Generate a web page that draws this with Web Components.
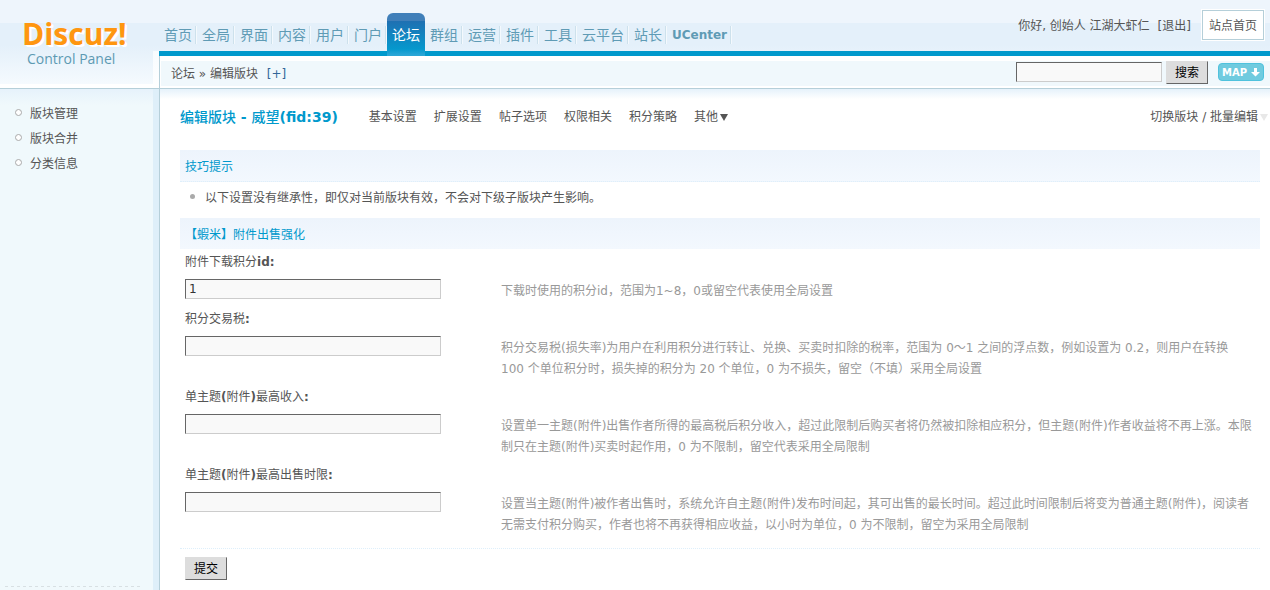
<!DOCTYPE html>
<html lang="zh-CN">
<head>
<meta charset="utf-8">
<title>Discuz! Control Panel</title>
<style>
html,body{margin:0;height:100%}
body{font:12px/21px "DejaVu Sans","Noto Sans CJK SC",sans-serif;color:#555;background:#fff;
--blue:#09c;--line:#b5cfd9}
</style>
</head>
<body>
<dz-shell>
  <dz-logo slot="logo"></dz-logo>
  <dz-nav slot="nav" items="首页,全局,界面,内容,用户,门户,论坛,群组,运营,插件,工具,云平台,站长,UCenter" current="论坛"></dz-nav>
  <dz-user slot="user"></dz-user>
  <dz-crumbs slot="crumbs"></dz-crumbs>
  <dz-side slot="side" items="版块管理,版块合并,分类信息"></dz-side>
  <dz-titlebar items="基本设置,扩展设置,帖子选项,权限相关,积分策略"></dz-titlebar>
  <dz-section dotted><span slot="title">技巧提示</span><dz-tip>以下设置没有继承性，即仅对当前版块有效，不会对下级子版块产生影响。</dz-tip></dz-section>
  <dz-section><span slot="title">【蝦米】附件出售强化</span>
    <dz-field label="附件下载积分" tail="id:" value="1">下载时使用的积分id，范围为1~8，0或留空代表使用全局设置</dz-field>
    <dz-field label="积分交易税" tail=":">积分交易税(损失率)为用户在利用积分进行转让、兑换、买卖时扣除的税率，范围为 0～1 之间的浮点数，例如设置为 0.2，则用户在转换 100 个单位积分时，损失掉的积分为 20 个单位，0 为不损失，留空（不填）采用全局设置</dz-field>
    <dz-field label="单主题(附件)最高收入" tail=":">设置单一主题(附件)出售作者所得的最高税后积分收入，超过此限制后购买者将仍然被扣除相应积分，但主题(附件)作者收益将不再上涨。本限制只在主题(附件)买卖时起作用，0 为不限制，留空代表采用全局限制</dz-field>
    <dz-field label="单主题(附件)最高出售时限" tail=":">设置当主题(附件)被作者出售时，系统允许自主题(附件)发布时间起，其可出售的最长时间。超过此时间限制后将变为普通主题(附件)，阅读者无需支付积分购买，作者也将不再获得相应收益，以小时为单位，0 为不限制，留空为采用全局限制</dz-field>
  </dz-section>
  <dz-submit>提交</dz-submit>
</dz-shell>
<script>
const LINK = 'a{color:inherit;text-decoration:none}';
const INPUT = 'input{box-sizing:border-box;height:20px;margin:0;padding:0 3px;border:1px solid;border-color:#666 #ccc #ccc #666;background:#f9f9f9;font:inherit;color:#333;border-radius:0}';
const BUTTON = 'button{box-sizing:border-box;width:42px;height:23px;margin:0;padding:0;border:1px solid;border-color:#ddd #666 #666 #ddd;background:#ddd;font:inherit;line-height:20px;color:#000;border-radius:0}';
const define = (name, render) => customElements.define(name, class extends HTMLElement {
  connectedCallback() {
    if (!this.shadowRoot) this.attachShadow({mode: 'open'}).innerHTML = render(this);
  }
});
const list = el => el.getAttribute('items').split(',');

define('dz-shell', () => `<style>
:host{display:flex;flex-direction:column;min-height:100%}
header{display:flex;background:linear-gradient(#eef5fc 23px,#e4f0fa 23px,#e4f0fa 45px,#f5fafe 84px,#fff 84px);border-bottom:1px solid var(--line)}
.brand{flex:none;width:159px;background:linear-gradient(#f7fbfe,#fff) right bottom/6px 37px no-repeat}
.top{flex:1;min-width:0}
.row{display:flex;justify-content:space-between;height:51px;border-bottom:5px solid var(--blue)}
.low{background:#fff;border-left:1px solid var(--line);padding:5px 0 2px 1px}
.body{flex:1;display:flex}
aside{flex:none;box-sizing:border-box;width:160px;border-right:1px solid var(--line);background:linear-gradient(#deeff9,#deeff9) right/6px 100% no-repeat,linear-gradient(#e6f2fb,#f0f9fc 16px);display:flex}
main{flex:1;min-width:0;padding:0 10px 8px 20px;background:linear-gradient(#e6f2fb,#fff 10px)}
</style>
<header><div class="brand"><slot name="logo"></slot></div>
<div class="top"><div class="row"><slot name="nav"></slot><slot name="user"></slot></div><div class="low"><slot name="crumbs"></slot></div></div></header>
<div class="body"><aside><slot name="side"></slot></aside><main><slot></slot></main></div>`);

define('dz-logo', () => `<style>
:host{display:block;padding:16px 0 0 22px;font-family:"Open Sans",sans-serif;white-space:nowrap}
b,span{display:block}
b{font-size:30px;line-height:36px;color:#ff9610;text-shadow:1px 1px #fff,2px 2px #fff}
span{padding-left:5px;font-size:14px;line-height:14px;color:#5d9ab3}
</style><b>Discuz!</b><span>Control Panel</span>`);

define('dz-nav', el => `<style>${LINK}
:host{display:block;padding-top:13px}
nav{display:flex}
a{padding:0 5px;height:38px;font-size:14px;line-height:44px;color:#5f9bb5;white-space:nowrap;background:linear-gradient(90deg,#cde1ec 50%,#f4f9fd 50%) right 13px/2px 18px no-repeat}
a.latin{font-size:12px;font-weight:bold}
a.on{height:43px;color:#fff;border-radius:6px 6px 0 0;background:linear-gradient(#407fb9 8px,#1f70b2 8px,#0598cd 36px,#2ba6d6 42px)}
</style><nav>${list(el).map(t => `<a href="#" class="${t === el.getAttribute('current') ? 'on' : /^\w+$/.test(t) ? 'latin' : ''}">${t}</a>`).join('')}</nav>`);

define('dz-user', () => `<style>${LINK}
:host{display:flex;align-items:flex-start;padding:10px 6px 0 0;white-space:nowrap;line-height:32px}
.logout{margin:0 11px 0 8px}
.home{padding:0 6px;height:28px;border:1px solid var(--line);background:#fff;outline:1px solid #fff;line-height:30px}
</style><span>你好, 创始人 江湖大虾仁</span><a class="logout" href="#">[退出]</a><a class="home" href="#">站点首页</a>`);

define('dz-crumbs', () => `<style>${LINK}${INPUT}${BUTTON}
:host{display:flex;justify-content:space-between;height:25px;background:#f0f8fc;padding:0 6px 0 10px}
.path{line-height:27px}
.add{margin-left:5px;color:#369}
form{display:flex;align-items:flex-start}
input{width:146px;margin:1px 4px 0 0}
.map{box-sizing:border-box;display:flex;align-items:center;justify-content:space-between;width:46px;height:18px;margin:2px 0 0 10px;padding:0 3px;border:1px solid #4fc2dd;border-radius:4px;background:#70cbdf;color:#fff;font-size:10px;font-weight:bold}
</style><div class="path">论坛 » 编辑版块 <a class="add" href="#">[+]</a></div>
<form onsubmit="return false"><input type="text" aria-label="搜索"><button>搜索</button><a class="map" href="#">MAP<svg width="9" height="9" viewBox="0 0 9 9"><path d="M3 0h3v4h3L4.500 8.500 0 4h3z" fill="#fff"/></svg></a></form>`);

define('dz-side', el => `<style>${LINK}
:host{flex:1;display:flex;flex-direction:column;justify-content:space-between;padding:13px 12px 3px 5px}
ul{margin:0;padding:0;list-style:none}
li{display:flex;line-height:25px}
li::before{content:"";box-sizing:border-box;width:7px;height:7px;margin:7px 8px 0 10px;border:1px solid #aaa;border-radius:50%;background:#fff}
.rule{height:1px;margin-right:6px;background:repeating-linear-gradient(90deg,#d8e0e3 0 3px,transparent 3px 6px)}
</style><ul>${list(el).map(t => `<li><a href="#">${t}</a></li>`).join('')}</ul><div class="rule"></div>`);

define('dz-titlebar', el => `<style>${LINK}
:host{display:flex;align-items:center;height:57px;margin:0 -8px 4px 0;white-space:nowrap}
h1{margin:0 31px 0 0;font-size:14px;color:var(--blue)}
h1 span{font-weight:500}
nav{flex:1;display:flex;gap:17px}
.more,.switch{display:flex;align-items:center;gap:2px}
</style><h1><span>编辑版块</span> - <span>威望</span>(fid:39)</h1>
<nav>${list(el).map(t => `<a href="#">${t}</a>`).join('')}<a class="more" href="#">其他<svg width="8" height="7" viewBox="0 0 8 7"><path d="M0 0h8L4 7z" fill="#555"/></svg></a></nav>
<a class="switch" href="#">切换版块 / 批量编辑<svg width="8" height="7" viewBox="0 0 8 7"><path d="M0 0h8L4 7z" fill="#e8e8e8"/></svg></a>`);

define('dz-section', () => `<style>
:host{display:block}
h2{box-sizing:border-box;height:31px;margin:0;padding:0 5px;font-size:12px;font-weight:normal;line-height:34px;color:var(--blue);background:linear-gradient(#edf4fc,#f3f8fe)}
:host([dotted]) h2{height:32px;border-bottom:1px dotted #deeffb}
</style><h2><slot name="title"></slot></h2><slot></slot>`);

define('dz-tip', () => `<style>
:host{display:flex;padding:6px 5px 9px 10px}
:host::before{content:"";flex:none;width:5px;height:5px;margin:6px 10px 0 0;border-radius:50%;background:#aaa}
</style><div><slot></slot></div>`);

define('dz-field', el => `<style>${INPUT}
:host{display:block;padding:0 5px}
label{display:block;padding-top:1px;line-height:24px}
.row{display:flex;padding:5px 0 4px}
input{flex:none;width:256px;margin-right:60px}
p{flex:1;margin:0;padding:2px 2px 0 0;color:#999}
</style><label for="f">${el.getAttribute('label').replace(/[()]/g, '<b>$&</b>')}<b>${el.getAttribute('tail')}</b></label>
<div class="row"><input id="f" type="text" value="${el.getAttribute('value') || ''}"><p><slot></slot></p></div>`);

define('dz-submit', () => `<style>${BUTTON}
:host{display:block;margin-top:8px;padding:8px 5px 0;border-top:1px dotted #deeffb}
</style><button><slot></slot></button>`);
</script>
</body>
</html>
